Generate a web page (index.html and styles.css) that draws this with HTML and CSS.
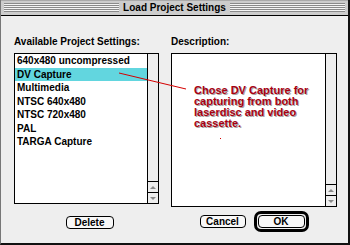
FILE: index.html
```html
<!DOCTYPE html>
<html lang="en">
<head>
    <meta charset="UTF-8">
    <title>Load Project Settings</title>
    <link rel="stylesheet" href="styles.css">
</head>
<body>
    <div class="window">
        <div class="titlebar">
            <span class="stripes"></span>
            <span class="title">Load Project Settings</span>
            <span class="stripes"></span>
        </div>

        <div class="content">
            <div class="col col-left">
                <div class="label">Available Project Settings:</div>
                <div class="listbox list-settings">
                    <ul class="items">
                        <li>640x480 uncompressed</li>
                        <li class="selected">DV Capture</li>
                        <li>Multimedia</li>
                        <li>NTSC 640x480</li>
                        <li>NTSC 720x480</li>
                        <li>PAL</li>
                        <li>TARGA Capture</li>
                    </ul>
                    <div class="scrollbar">
                        <div class="track"></div>
                        <div class="arrow up"></div>
                        <div class="arrow down"></div>
                    </div>
                </div>
                <div class="buttons buttons-left">
                    <button class="btn btn-delete">Delete</button>
                </div>
            </div>

            <div class="col col-right">
                <div class="label">Description:</div>
                <div class="listbox list-desc">
                    <div class="desc">
                        <p class="note">Chose DV Capture for<br>capturing from both<br>laserdisc and video<br>cassette.</p>
                    </div>
                    <div class="scrollbar">
                        <div class="track"></div>
                        <div class="arrow up"></div>
                        <div class="arrow down"></div>
                    </div>
                </div>
                <div class="buttons buttons-right">
                    <button class="btn btn-cancel">Cancel</button>
                    <span class="default-ring"><button class="btn btn-ok">OK</button></span>
                </div>
            </div>
        </div>

        <!-- annotation pointer drawn over the dialog -->
        <svg class="pointer" width="350" height="245" viewBox="0 0 350 245">
            <line x1="119" y1="73" x2="186" y2="89" stroke="#d40000" stroke-width="1"/>
            <rect x="220" y="138" width="1" height="1" fill="#d40000"/>
        </svg>
    </div>
</body>
</html>
```

FILE: styles.css
```css
body {
    margin: 0;
    font-family: 'Liberation Sans', Arial, sans-serif;
    font-weight: bold;
    font-size: 10px;
    color: #000;
    background: #eee;
}
.window {
    position: relative;
    width: 350px;
    height: 245px;
    box-sizing: border-box;
    background-color: #eeeeee;
    border-left: 1px solid #777;
    border-right: 2px solid #111;
    border-bottom: 2px solid #111;
}
.titlebar {
    height: 16px;
    box-sizing: border-box;
    display: flex;
    align-items: center;
    padding: 0 3px 0 3px;
    background-color: #cccccc;
    border-top: 1px solid #aaa;
    border-bottom: 1px solid #000;
}
.stripes {
    flex: 1;
    height: 9px;
    margin-top: -1px;
    background: repeating-linear-gradient(to bottom, #8a8a8a 0 1px, #f4f4f4 1px 2px);
}
.title {
    padding: 0 4px;
    line-height: 14px;
    margin-top: -1px;
}
.content {
    display: flex;
    gap: 12px;
    padding: 20px 0 0 13px;
}
.col {
    display: flex;
    flex-direction: column;
}
.col-left {
    width: 145px;
}
.col-right {
    width: 166px;
}
.label {
    line-height: 12px;
    height: 12px;
    margin-bottom: 5px;
}
.listbox {
    display: flex;
    border: 1px solid #000;
    background: #fff;
    box-sizing: border-box;
}
.list-settings {
    height: 151px;
}
.list-desc {
    height: 154px;
}
.items {
    flex: 1;
    list-style: none;
    margin: 0;
    padding: 0;
}
.items li {
    height: 13.5px;
    line-height: 13.5px;
    padding-left: 2px;
}
.items li:first-child {
    margin-top: 0;
}
.items .selected {
    background-color: #62d6df;
}
.desc {
    flex: 1;
    padding: 31px 0 0 22px;
}
.note {
    margin: 0;
    font-size: 11px;
    line-height: 11px;
    color: #a80012;
    text-shadow: 1px 1px 0 #a6a6a6;
}
.scrollbar {
    width: 10px;
    border-left: 1px solid #000;
    background: #eeeeee;
    display: flex;
    flex-direction: column;
}
.track {
    flex: 1;
}
.arrow {
    height: 10px;
    border-top: 1px solid #000;
    display: flex;
    align-items: center;
    justify-content: center;
}
.arrow::after {
    content: "";
    width: 0;
    height: 0;
    border-left: 3px solid transparent;
    border-right: 3px solid transparent;
}
.arrow.up::after {
    border-bottom: 3px solid #8a8a8a;
}
.arrow.down::after {
    border-top: 3px solid #8a8a8a;
}
.buttons {
    display: flex;
    align-items: center;
    justify-content: center;
}
.buttons-left {
    margin-top: 12px;
    padding-left: 6px;
}
.buttons-right {
    margin-top: 4px;
    gap: 8px;
}
.btn {
    font-family: inherit;
    font-weight: bold;
    font-size: 10px;
    height: 13px;
    line-height: 11px;
    padding: 0;
    margin: 0;
    border: 1px solid #000;
    border-radius: 4px;
    background: #f8f8f8;
    color: #000;
}
.btn-delete {
    width: 48px;
}
.btn-cancel {
    width: 46px;
}
.btn-ok {
    width: 47px;
    display: block;
}
.default-ring {
    display: block;
    border: 3px solid #000;
    border-radius: 7px;
    padding: 1px;
}
.pointer {
    position: absolute;
    left: -1px;
    top: 0;
    pointer-events: none;
}
```
